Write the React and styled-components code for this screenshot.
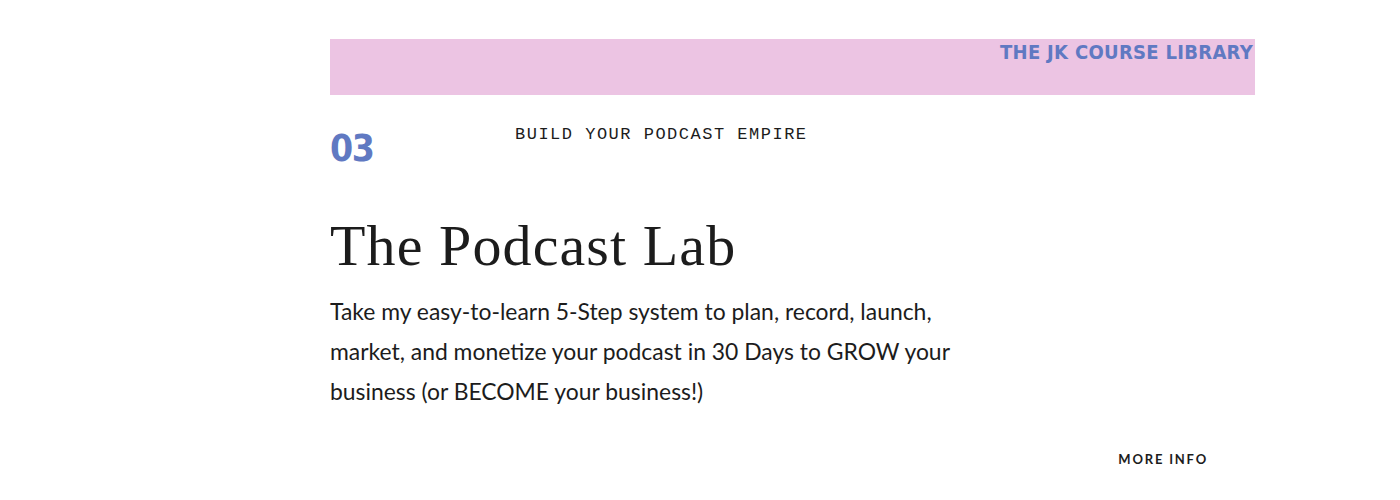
import React from 'react'
import styled, { createGlobalStyle } from 'styled-components'

const BLUE = '#6079c2'
const PINK = '#ecc4e3'
const INK = '#1c1c1c'

const GlobalStyle = createGlobalStyle`
  html, body {
    margin: 0;
    padding: 0;
    background: #fff;
  }
  body {
    font-family: 'Lato', 'Liberation Sans', sans-serif;
    color: ${INK};
  }
`

const Page = styled.div`
  width: 1400px;
  height: 500px;
  overflow: hidden;
  padding: 39px 145px 0 330px;
  box-sizing: border-box;
`

const Banner = styled.div`
  height: 56px;
  background: ${PINK};
  display: flex;
  justify-content: flex-end;
  align-items: flex-start;
  padding: 1px 2px 0 0;
  box-sizing: border-box;
`

const LibraryTitle = styled.span`
  font-family: 'DejaVu Sans Condensed', 'Liberation Sans', sans-serif;
  font-weight: bold;
  font-size: 20px;
  letter-spacing: 0.3px;
  color: ${BLUE};
  text-transform: uppercase;
`

const MetaRow = styled.div`
  display: grid;
  grid-template-columns: 185px 1fr;
  align-items: start;
  margin-top: 28px;
`

const Number = styled.div`
  font-family: 'DejaVu Sans Condensed', 'Liberation Sans', sans-serif;
  font-weight: bold;
  font-size: 37px;
  line-height: 1;
  letter-spacing: -1.5px;
  color: ${BLUE};
  padding-top: 7px;
`

const Tagline = styled.div`
  font-family: 'Liberation Mono', monospace;
  font-size: 17px;
  letter-spacing: 1.5px;
  line-height: 1;
  color: ${INK};
  padding-top: 3px;
`

const Title = styled.h1`
  font-family: 'Liberation Serif', serif;
  font-weight: normal;
  font-size: 58px;
  line-height: 1;
  letter-spacing: 1.1px;
  margin: 50px 0 0;
  color: ${INK};
`

const Description = styled.p`
  font-family: 'Lato', 'Liberation Sans', sans-serif;
  font-size: 22.9px;
  line-height: 40px;
  width: 630px;
  margin: 16px 0 0;
  color: ${INK};
`

const Footer = styled.div`
  display: flex;
  justify-content: flex-end;
  padding-right: 47px;
  margin-top: 40px;
`

const MoreLink = styled.a`
  font-family: 'Lato', 'Liberation Sans', sans-serif;
  font-weight: bold;
  font-size: 13px;
  letter-spacing: 1.8px;
  color: ${INK};
  text-decoration: none;
  text-transform: uppercase;
  cursor: pointer;
`

const App = () => (
  <Page>
    <GlobalStyle />
    <Banner>
      <LibraryTitle>The JK Course Library</LibraryTitle>
    </Banner>
    <MetaRow>
      <Number>03</Number>
      <Tagline>BUILD YOUR PODCAST EMPIRE</Tagline>
    </MetaRow>
    <Title>The Podcast Lab</Title>
    <Description>
      Take my easy-to-learn 5-Step system to plan, record, launch, market, and
      monetize your podcast in 30 Days to GROW your business (or BECOME your
      business!)
    </Description>
    <Footer>
      <MoreLink>More Info</MoreLink>
    </Footer>
  </Page>
)

export default App
